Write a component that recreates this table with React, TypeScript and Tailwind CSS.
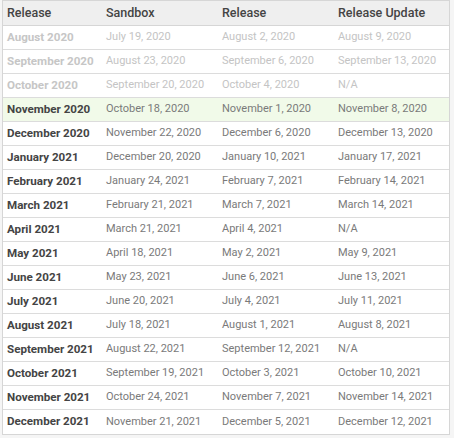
import React from "react";

type Row = { r: string; s: string; rel: string; u: string; past?: boolean; cur?: boolean };

const rows: Row[] = [
  { r: "August 2020", s: "July 19, 2020", rel: "August 2, 2020", u: "August 9, 2020", past: true },
  { r: "September 2020", s: "August 23, 2020", rel: "September 6, 2020", u: "September 13, 2020", past: true },
  { r: "October 2020", s: "September 20, 2020", rel: "October 4, 2020", u: "N/A", past: true },
  { r: "November 2020", s: "October 18, 2020", rel: "November 1, 2020", u: "November 8, 2020", cur: true },
  { r: "December 2020", s: "November 22, 2020", rel: "December 6, 2020", u: "December 13, 2020" },
  { r: "January 2021", s: "December 20, 2020", rel: "January 10, 2021", u: "January 17, 2021" },
  { r: "February 2021", s: "January 24, 2021", rel: "February 7, 2021", u: "February 14, 2021" },
  { r: "March 2021", s: "February 21, 2021", rel: "March 7, 2021", u: "March 14, 2021" },
  { r: "April 2021", s: "March 21, 2021", rel: "April 4, 2021", u: "N/A" },
  { r: "May 2021", s: "April 18, 2021", rel: "May 2, 2021", u: "May 9, 2021" },
  { r: "June 2021", s: "May 23, 2021", rel: "June 6, 2021", u: "June 13, 2021" },
  { r: "July 2021", s: "June 20, 2021", rel: "July 4, 2021", u: "July 11, 2021" },
  { r: "August 2021", s: "July 18, 2021", rel: "August 1, 2021", u: "August 8, 2021" },
  { r: "September 2021", s: "August 22, 2021", rel: "September 12, 2021", u: "N/A" },
  { r: "October 2021", s: "September 19, 2021", rel: "October 3, 2021", u: "October 10, 2021" },
  { r: "November 2021", s: "October 24, 2021", rel: "November 7, 2021", u: "November 14, 2021" },
  { r: "December 2021", s: "November 21, 2021", rel: "December 5, 2021", u: "December 12, 2021" },
];

export default function App() {
  return (
    <div
      className="w-[454px] h-[438px] bg-[#f5f5f5] pl-[2px] overflow-hidden"
      style={{ fontFamily: "Roboto, 'Noto Sans', sans-serif" }}
    >
      <div className="w-[448px] border border-[#d6d6d6] bg-white">
        <div className="flex h-[25px] items-center bg-[#efefef] border-b border-[#d6d6d6] text-[12.5px] font-medium text-[#444]">
          <div className="w-[99px] pl-[4px]">Release</div>
          <div className="w-[116px] pl-[4px]">Sandbox</div>
          <div className="w-[116px] pl-[4px]">Release</div>
          <div className="flex-1 pl-[4px]">Release Update</div>
        </div>
        {rows.map((row, i) => {
          const last = i === rows.length - 1;
          const base = row.past ? "text-[#c4c4c4]" : "text-[#7a7a7a]";
          const first = row.past ? "text-[#c6c6c6]" : "text-[#444]";
          return (
            <div
              key={i}
              className={
                "flex h-[24px] items-center text-[11px] " +
                (last ? "" : "border-b border-[#dcdcdc] ") +
                (row.cur ? "bg-[#f1fae9]" : "")
              }
            >
              <div className={"w-[99px] pl-[4px] text-[11.6px] font-bold whitespace-nowrap " + first}>{row.r}</div>
              <div className={"w-[116px] pl-[4px] whitespace-nowrap " + base}>{row.s}</div>
              <div className={"w-[116px] pl-[4px] whitespace-nowrap " + base}>{row.rel}</div>
              <div className={"flex-1 pl-[4px] whitespace-nowrap " + base}>{row.u}</div>
            </div>
          );
        })}
      </div>
    </div>
  );
}
